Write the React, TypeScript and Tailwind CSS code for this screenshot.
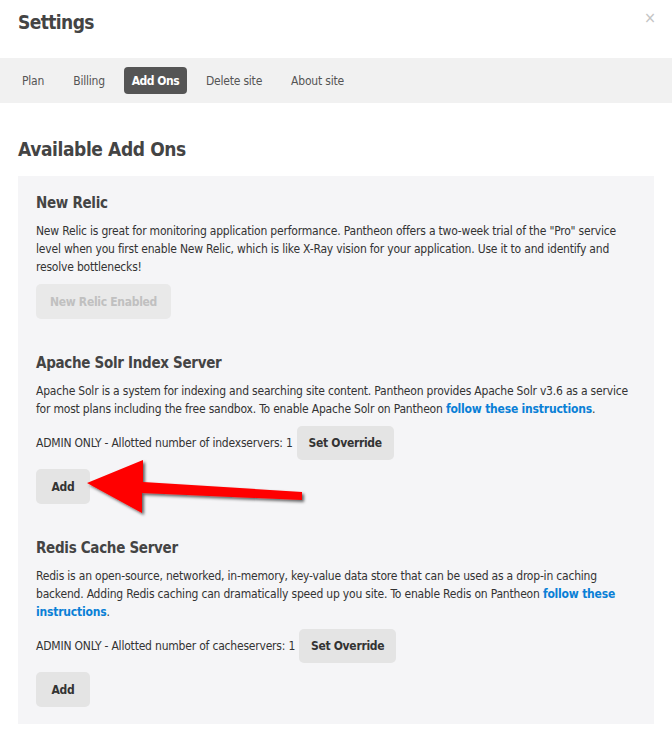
const font = { fontFamily: '"DejaVu Sans Condensed", "Liberation Sans", sans-serif' };

const tabs = ["Plan", "Billing", "Add Ons", "Delete site", "About site"];

const Btn = ({ label, w, h = "h-[35px]", disabled }: { label: string; w: string; h?: string; disabled?: boolean }) => (
  <button
    className={
      (disabled
        ? "bg-[#e9e9e9] text-[#c0c0c0] "
        : "bg-[#e4e4e4] text-[#333] ") +
      w +
      " " +
      h +
      " rounded-[5px] text-[12px] font-bold tracking-[-0.3px] flex items-center justify-center"
    }
  >
    {label}
  </button>
);

const Link = ({ children }: { children: string }) => (
  <a className="text-[#0a80d6] font-bold">{children}</a>
);

const Arrow = () => (
  <svg className="absolute left-[60px] top-[450px] pointer-events-none" width="260" height="80" viewBox="60 450 260 80">
    <defs>
      <filter id="sh" x="-10%" y="-20%" width="130%" height="160%">
        <feDropShadow dx="2" dy="2" stdDeviation="1.5" floodColor="#000" floodOpacity="0.6" />
      </filter>
    </defs>
    <polygon
      points="87,483 143,460 143,482 302,492 302,500 142,493 142,513"
      fill="#ff0000"
      filter="url(#sh)"
    />
  </svg>
);

export default function App() {
  return (
    <div className="relative w-[672px] min-h-[744px] bg-white text-[#333]" style={font}>
      {/* header */}
      <div className="h-[58px] flex items-start justify-between pl-[18px] pr-[16px] pt-[9px]">
        <h1 className="text-[19px] leading-[26px] font-bold tracking-[-0.6px] text-[#444]">Settings</h1>
        <span className="text-[16px] leading-[18px] text-[#c4c4c4]">×</span>
      </div>

      {/* tabs */}
      <div className="h-[45px] bg-[#f1f1f1] flex items-center gap-[9px] px-[12px]">
        {tabs.map((t) =>
          t === "Add Ons" ? (
            <span key={t} className="h-[27px] w-[63px] flex items-center justify-center rounded-[4px] bg-[#555] text-white font-bold text-[12px] tracking-[-0.5px]">
              {t}
            </span>
          ) : (
            <span key={t} className="h-[27px] px-[10px] flex items-center text-[12px] tracking-[-0.2px] text-[#555]">
              {t}
            </span>
          )
        )}
      </div>

      <div className="px-[18px] pt-[32px] pb-[19px]">
        <h2 className="text-[19px] leading-[28px] font-bold tracking-[-0.4px] text-[#444]">Available Add Ons</h2>

        <div className="mt-[13px] bg-[#f5f5f7] px-[18px] pt-[15px] pb-[17px] text-[12px] tracking-[-0.2px]">
          {/* New Relic */}
          <section>
            <h3 className="text-[15px] leading-[24px] font-bold tracking-[-0.3px] text-[#444]">New Relic</h3>
            <p className="mt-[7px] leading-[18px]">
              New Relic is great for monitoring application performance. Pantheon offers a two-week trial of the "Pro" service
              level when you first enable New Relic, which is like X-Ray vision for your application. Use it to and identify and
              resolve bottlenecks!
            </p>
            <div className="mt-[8px]">
              <Btn label="New Relic Enabled" w="w-[135px]" disabled />
            </div>
          </section>

          {/* Apache Solr */}
          <section className="mt-[32px]">
            <h3 className="text-[15px] leading-[24px] font-bold tracking-[-0.3px] text-[#444]">Apache Solr Index Server</h3>
            <p className="mt-[7px] leading-[18px]">
              Apache Solr is a system for indexing and searching site content. Pantheon provides Apache Solr v3.6 as a service
              for most plans including the free sandbox. To enable Apache Solr on Pantheon <Link>follow these instructions</Link>.
            </p>
            <div className="mt-[8px] flex items-center gap-[4px]">
              <span>ADMIN ONLY - Allotted number of indexservers: 1</span>
              <Btn label="Set Override" w="w-[97px]" h="h-[34px]" />
            </div>
            <div className="mt-[9px]">
              <Btn label="Add" w="w-[54px]" />
            </div>
          </section>

          {/* Redis */}
          <section className="mt-[32px]">
            <h3 className="text-[15px] leading-[24px] font-bold tracking-[-0.3px] text-[#444]">Redis Cache Server</h3>
            <p className="mt-[7px] leading-[18px]">
              Redis is an open-source, networked, in-memory, key-value data store that can be used as a drop-in caching
              backend. Adding Redis caching can dramatically speed up you site. To enable Redis on Pantheon <Link>follow these</Link>{" "}
              <Link>instructions</Link>.
            </p>
            <div className="mt-[8px] flex items-center gap-[4px]">
              <span>ADMIN ONLY - Allotted number of cacheservers: 1</span>
              <Btn label="Set Override" w="w-[97px]" h="h-[34px]" />
            </div>
            <div className="mt-[9px]">
              <Btn label="Add" w="w-[54px]" />
            </div>
          </section>
        </div>
      </div>

      <Arrow />
    </div>
  );
}
